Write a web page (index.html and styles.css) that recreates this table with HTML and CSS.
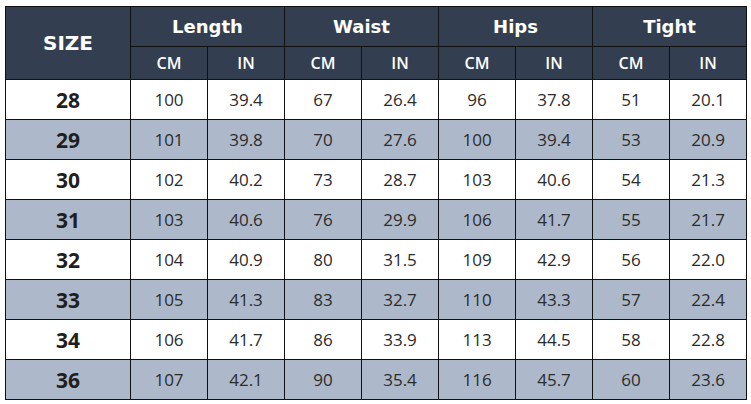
FILE: index.html
```html
<!DOCTYPE html>
<html>
<head>
<meta charset="utf-8">
<link rel="stylesheet" href="styles.css">
</head>
<body>
<table class="chart">
  <colgroup>
    <col class="c-size">
    <col class="c-val"><col class="c-val"><col class="c-val"><col class="c-val">
    <col class="c-val"><col class="c-val"><col class="c-val"><col class="c-val">
  </colgroup>
  <thead>
    <tr class="h1">
      <th rowspan="2" class="size-h">SIZE</th>
      <th colspan="2">Length</th>
      <th colspan="2">Waist</th>
      <th colspan="2">Hips</th>
      <th colspan="2">Tight</th>
    </tr>
    <tr class="h2">
      <th>CM</th><th>IN</th><th>CM</th><th>IN</th><th>CM</th><th>IN</th><th>CM</th><th>IN</th>
    </tr>
  </thead>
  <tbody>
    <tr><td class="sz">28</td><td>100</td><td>39.4</td><td>67</td><td>26.4</td><td>96</td><td>37.8</td><td>51</td><td>20.1</td></tr>
    <tr class="alt"><td class="sz">29</td><td>101</td><td>39.8</td><td>70</td><td>27.6</td><td>100</td><td>39.4</td><td>53</td><td>20.9</td></tr>
    <tr><td class="sz">30</td><td>102</td><td>40.2</td><td>73</td><td>28.7</td><td>103</td><td>40.6</td><td>54</td><td>21.3</td></tr>
    <tr class="alt"><td class="sz">31</td><td>103</td><td>40.6</td><td>76</td><td>29.9</td><td>106</td><td>41.7</td><td>55</td><td>21.7</td></tr>
    <tr><td class="sz">32</td><td>104</td><td>40.9</td><td>80</td><td>31.5</td><td>109</td><td>42.9</td><td>56</td><td>22.0</td></tr>
    <tr class="alt"><td class="sz">33</td><td>105</td><td>41.3</td><td>83</td><td>32.7</td><td>110</td><td>43.3</td><td>57</td><td>22.4</td></tr>
    <tr><td class="sz">34</td><td>106</td><td>41.7</td><td>86</td><td>33.9</td><td>113</td><td>44.5</td><td>58</td><td>22.8</td></tr>
    <tr class="alt"><td class="sz">36</td><td>107</td><td>42.1</td><td>90</td><td>35.4</td><td>116</td><td>45.7</td><td>60</td><td>23.6</td></tr>
  </tbody>
</table>
</body>
</html>
```
FILE: styles.css
```css
html, body {
  margin: 0;
  padding: 0;
  background: #ffffff;
}
body {
  padding: 6px 0 0 5px;
  font-family: "Open Sans", "Liberation Sans", sans-serif;
}
.chart {
  border-collapse: collapse;
  table-layout: fixed;
  width: 742px;
}
.c-size { width: 125px; }
.c-val { width: 77px; }
.chart th, .chart td {
  border: 1px solid #111111;
  padding: 0;
  text-align: center;
  vertical-align: middle;
}
.chart th {
  background: #333f50;
  color: #ffffff;
}
.h1 th {
  height: 39px;
  font-family: "Comic Sans MS", "DejaVu Sans", sans-serif;
  font-weight: bold;
  font-size: 18px;
}
.h1 th.size-h {
  font-size: 20px;
}
.h2 th {
  height: 32px;
  font-size: 16px;
  font-weight: 600;
}
.chart td {
  height: 39px;
  font-size: 17px;
  color: #2b2b2b;
}
.chart td.sz {
  font-size: 21px;
  font-weight: bold;
  color: #1f1f1f;
}
.alt td {
  background: #adb9ca;
}
```
